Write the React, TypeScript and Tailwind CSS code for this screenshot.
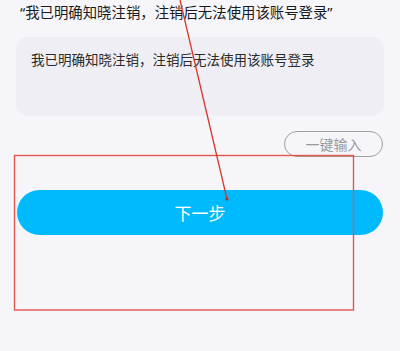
import React from 'react';

const font = { fontFamily: '"Noto Sans CJK SC", "Noto Sans", sans-serif' };
const quoteFont = { fontFamily: '"Noto Sans", "Noto Sans CJK SC", sans-serif' };

export default function App() {
  return (
    <div
      className="relative w-[400px] h-[351px] overflow-hidden bg-[#f6f6fa]"
      style={font}
    >
      <div className="px-[16px]">
        <p
          className="pt-[2px] pl-[4px] text-[14.4px] leading-[22px] text-[#1a1a1a]"
          style={quoteFont}
        >
          “我已明确知晓注销，注销后无法使用该账号登录”
        </p>

        <div className="mt-[13px] h-[79px] rounded-[12px] bg-[#eeeef4] px-[15px] pt-[11px]">
          <p className="text-[13.5px] leading-[22px] text-[#2a2a2a]">
            我已明确知晓注销，注销后无法使用该账号登录
          </p>
        </div>

        <div className="mt-[15px] flex justify-end pr-[1px]">
          <button className="h-[26px] w-[99px] rounded-full border border-[#a0a0a0] text-[14px] leading-none text-[#999999]">
            一键输入
          </button>
        </div>

        <button className="mt-[33px] ml-[1px] flex h-[45px] w-[366px] items-center justify-center rounded-full bg-[#00bafe] text-[17px] text-white">
          下一步
        </button>
      </div>

      {/* red annotations */}
      <svg
        className="pointer-events-none absolute inset-0"
        width="400"
        height="351"
        viewBox="0 0 400 351"
      >
        <rect
          x="14.5"
          y="155.5"
          width="339"
          height="154.5"
          fill="none"
          stroke="#e0584c"
          strokeWidth="1.4"
        />
        <path d="M180 0 L227 199" stroke="#d9352a" strokeWidth="1.3" fill="none" />
        <circle cx="227" cy="199" r="1.6" fill="#c8281e" />
      </svg>
    </div>
  );
}
